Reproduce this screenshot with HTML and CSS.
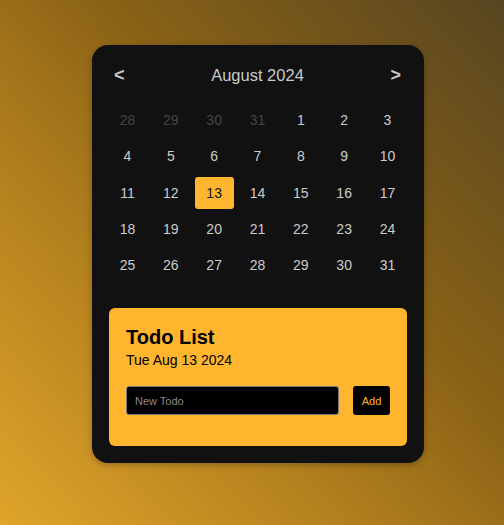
FILE: index.html
```html
<!DOCTYPE html>
<html>
<head>
<meta charset="utf-8">
<link rel="stylesheet" href="styles.css">
</head>
<body>
<div class="card">
  <div class="header">
    <span class="nav">&lt;</span>
    <span class="title">August 2024</span>
    <span class="nav">&gt;</span>
  </div>
  <div class="grid">
    <div class="day other">28</div><div class="day other">29</div><div class="day other">30</div><div class="day other">31</div><div class="day">1</div><div class="day">2</div><div class="day">3</div>
    <div class="day">4</div><div class="day">5</div><div class="day">6</div><div class="day">7</div><div class="day">8</div><div class="day">9</div><div class="day">10</div>
    <div class="day">11</div><div class="day">12</div><div class="day selected">13</div><div class="day">14</div><div class="day">15</div><div class="day">16</div><div class="day">17</div>
    <div class="day">18</div><div class="day">19</div><div class="day">20</div><div class="day">21</div><div class="day">22</div><div class="day">23</div><div class="day">24</div>
    <div class="day">25</div><div class="day">26</div><div class="day">27</div><div class="day">28</div><div class="day">29</div><div class="day">30</div><div class="day">31</div>
  </div>
  <div class="todo">
    <h2 class="todo-title">Todo List</h2>
    <div class="todo-date">Tue Aug 13 2024</div>
    <div class="todo-form">
      <input class="todo-input" type="text" placeholder="New Todo">
      <button class="todo-add">Add</button>
    </div>
  </div>
</div>
</body>
</html>
```
FILE: styles.css
```css
html, body {
  margin: 0;
  height: 100%;
}
body {
  font-family: "Liberation Sans", Arial, sans-serif;
  background: linear-gradient(to top right, #e0a42a 0%, #b27f1e 35%, #8a6216 60%, #574521 100%);
  box-sizing: border-box;
  padding: 45px 0 0 92px;
}
.card {
  width: 332px;
  height: 418px;
  box-sizing: border-box;
  background: #111111;
  border-radius: 16px;
  padding: 17px 17px 17px 16px;
  box-shadow: 0 2px 6px rgba(0,0,0,0.25);
}
.header {
  display: flex;
  justify-content: space-between;
  align-items: center;
  height: 26px;
  padding: 0 6px 0 6px;
  color: #c8c8c8;
}
.title {
  font-size: 16.5px;
}
.nav {
  font-size: 18px;
  font-weight: bold;
}
.grid {
  display: grid;
  grid-template-columns: repeat(7, 39px);
  grid-auto-rows: 32px;
  column-gap: 4.33px;
  row-gap: 4.33px;
  margin-top: 16px;
}
.day {
  display: flex;
  align-items: center;
  justify-content: center;
  font-size: 14px;
  color: #cccccc;
  border-radius: 3px;
}
.day.other {
  color: #454545;
}
.day.selected {
  background: #ffb52e;
  color: #111111;
}
.todo {
  margin-top: 27px;
  margin-left: 1px;
  width: 298px;
  height: 138px;
  box-sizing: border-box;
  background: #ffb52e;
  border-radius: 6px;
  padding: 17px 17px;
}
.todo-title {
  margin: 0;
  font-size: 20px;
  font-weight: bold;
  color: #000;
  line-height: 24px;
}
.todo-date {
  font-size: 14px;
  color: #000;
  margin-top: 3px;
}
.todo-form {
  display: flex;
  align-items: center;
  margin-top: 18px;
  gap: 14px;
}
.todo-input {
  width: 213px;
  height: 29px;
  box-sizing: border-box;
  background: #000;
  border: 1px solid #7a7a7a;
  border-radius: 3px;
  padding: 0 8px;
  font-family: "Liberation Sans", Arial, sans-serif;
  font-size: 11px;
  color: #ccc;
  outline: none;
}
.todo-input::placeholder {
  color: #8a8a8a;
}
.todo-add {
  width: 37px;
  height: 29px;
  background: #000;
  color: #ffb52e;
  border: none;
  border-radius: 3px;
  font-family: "Liberation Sans", Arial, sans-serif;
  font-size: 11px;
  padding: 0;
}
```
